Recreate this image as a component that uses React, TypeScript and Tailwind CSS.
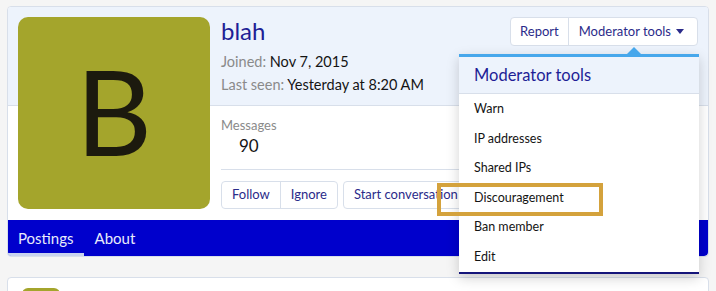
import React from 'react';

const modItems = ['Warn', 'IP addresses', 'Shared IPs', 'Discouragement', 'Ban member', 'Edit'];

export default function App() {
  return (
    <div className="relative h-[291px] overflow-hidden bg-[#f5f5f5] px-[7px] pt-[6px] font-[Lato,'Liberation_Sans',sans-serif] text-[#141414]">
      {/* profile card */}
      <div className="overflow-hidden rounded-[4px] border border-[#d8dfea] bg-white">
        <div className="flex gap-[11px] bg-[linear-gradient(to_bottom,#edf3fc_0px,#edf3fc_98px,#d8dfea_98px,#d8dfea_99px,#ffffff_99px)] pl-[10px] pr-[10px] pt-[10px] pb-[11px]">
          <div className="flex h-[192px] w-[192px] shrink-0 items-center justify-center rounded-[10px] bg-[#a4a52c]">
            <span className="-mt-[5px] text-[118px] leading-none text-[#1c1a0e]">B</span>
          </div>

          <div className="flex min-w-0 flex-1 flex-col">
            <div className="flex items-start justify-between">
              <div>
                <h1 className="text-[24px] leading-[28px] text-[#1e1e96]">blah</h1>
                <div className="mt-[5px] text-[14.5px] leading-[23px]">
                  <div>
                    <span className="text-[#8a8a8a]">Joined:</span> Nov 7, 2015
                  </div>
                  <div>
                    <span className="text-[#8a8a8a]">Last seen:</span> Yesterday at 8:20 AM
                  </div>
                </div>
              </div>
              <div className="flex h-[29px] overflow-hidden rounded-[4px] border border-[#d8dfea] bg-white text-[13px] text-[#2b2b8a]">
                <button className="px-[9px]">Report</button>
                <button className="flex items-center gap-[5px] border-l border-[#d8dfea] pl-[10px] pr-[13px]">
                  Moderator tools
                  <svg width="8" height="5" viewBox="0 0 8 5">
                    <path d="M0 0h8L4 5z" fill="#2b2b8a" />
                  </svg>
                </button>
              </div>
            </div>

            <dl className="mt-[20px] w-fit text-center">
              <dt className="text-[13px] leading-[18px] text-[#8a8a8a]">Messages</dt>
              <dd className="mt-[1px] text-[17px] leading-[22px]">90</dd>
            </dl>

            <div className="mt-[12px] flex gap-[5px] border-t border-[#d8dfea] pt-[11px] text-[13px] text-[#2b2b8a]">
              <div className="flex h-[28px] overflow-hidden rounded-[4px] border border-[#d8dfea] bg-white">
                <button className="px-[10px]">Follow</button>
                <button className="border-l border-[#d8dfea] px-[10px]">Ignore</button>
              </div>
              <button className="h-[28px] rounded-[4px] border border-[#d8dfea] bg-white px-[10px] whitespace-nowrap">
                Start conversation
              </button>
            </div>
          </div>
        </div>

        <nav className="flex h-[36px] rounded-b-[4px] bg-[#0000cc] text-[15px] text-[#e8ebfa]">
          <a className="flex items-center border-b-[3px] border-[#c9d3ef] px-[10px] pt-[3px]">Postings</a>
          <a className="flex items-center px-[11px]">About</a>
        </nav>
      </div>

      {/* next card */}
      <div className="mt-[20px] h-[40px] rounded-[4px] border border-[#d8dfea] bg-white pl-[14px] pt-[10px]">
        <div className="h-[38px] w-[38px] rounded-[6px] bg-[#a4a52c]" />
      </div>

      {/* moderator tools menu */}
      <div className="absolute left-[459px] top-[54px] w-[240px] border-t-[3px] border-b-2 border-t-[#47a7eb] border-b-[#15157a] bg-white shadow-[0_4px_12px_rgba(0,0,0,0.18)]">
        <svg className="absolute left-[168px] top-[-10px]" width="14" height="7" viewBox="0 0 14 7">
          <path d="M0 7L7 0l7 7z" fill="#47a7eb" />
        </svg>
        <div className="flex h-[37px] items-center border-b border-[#d8dfea] bg-[#edf3fc] px-[15px] text-[16.5px] text-[#1e1e96]">
          Moderator tools
        </div>
        <div className="pt-[1px]">
          {modItems.map(item => (
            <div key={item} className="flex h-[29.5px] items-center px-[15px] text-[12.5px]">
              {item}
            </div>
          ))}
        </div>
      </div>

      {/* highlight */}
      <div className="pointer-events-none absolute left-[437px] top-[183px] h-[33px] w-[166px] border-4 border-[#d4a23c]" />
    </div>
  );
}
